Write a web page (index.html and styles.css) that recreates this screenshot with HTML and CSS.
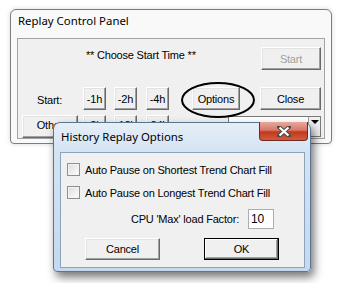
FILE: index.html
```html
<!DOCTYPE html>
<html lang="en">
<head>
  <meta charset="UTF-8">
  <title>Replay Control Panel</title>
  <link rel="stylesheet" href="styles.css">
</head>
<body>

  <div class="win main">
    <div class="title">Replay Control Panel</div>
    <div class="client">
      <div class="row r1">
        <span class="prompt">** Choose Start Time **</span>
        <button class="btn start" disabled>Start</button>
      </div>
      <div class="row r2">
        <span class="lbl">Start:</span>
        <button class="btn sm b1">-1h</button>
        <button class="btn sm b2">-2h</button>
        <button class="btn sm b3">-4h</button>
        <button class="btn opt">Options</button>
        <button class="btn close">Close</button>
      </div>
      <div class="row r3">
        <button class="btn other">Other</button>
        <button class="btn sm b1">-8h</button>
        <button class="btn sm b2">-12h</button>
        <button class="btn sm b3">-24h</button>
        <div class="combo">
          <span>800 (1s:1.0s)</span>
          <span class="drop"></span>
        </div>
      </div>
    </div>
  </div>

  <div class="ring"></div>

  <div class="win dlg">
    <div class="dlg-bar">
      <span class="title">History Replay Options</span>
      <span class="x">
        <svg width="14" height="11" viewBox="0 0 14 11">
          <path d="M2 1 L12 10 M12 1 L2 10" stroke="#4a4a4a" stroke-width="4" stroke-linecap="square"/>
          <path d="M2.5 1.5 L11.5 9.5 M11.5 1.5 L2.5 9.5" stroke="#fff" stroke-width="2.2"/>
        </svg>
      </span>
    </div>
    <div class="client dlg-body">
      <label class="chk"><span class="box"></span>Auto Pause on Shortest Trend Chart Fill</label>
      <label class="chk"><span class="box"></span>Auto Pause on Longest Trend Chart Fill</label>
      <div class="factor">
        <span>CPU 'Max' load Factor:</span>
        <span class="field">10</span>
      </div>
      <div class="actions">
        <button class="btn wide">Cancel</button>
        <button class="btn wide ok">OK</button>
      </div>
    </div>
  </div>

</body>
</html>
```

FILE: styles.css
```css
body {
  margin: 0;
  width: 342px;
  height: 283px;
  background: #fff;
  position: relative;
  overflow: hidden;
  font-family: 'Liberation Sans', Arial, sans-serif;
  font-size: 11px;
  letter-spacing: -0.2px;
  color: #000;
}

/* Fenster */
.win {
  position: absolute;
  box-sizing: border-box;
  display: flex;
  flex-direction: column;
}

.title {
  font-family: 'Noto Sans', sans-serif;
  font-size: 11.4px;
  letter-spacing: 0;
  color: #000;
}

.main {
  left: 10px;
  top: 9px;
  width: 322px;
  height: 135px;
  background: #f9f9f9;
  border: 1px solid #7d7d7d;
  border-radius: 6px 6px 4px 4px;
  padding: 0 6px 4px 6px;
  box-shadow: 0 0 5px rgba(0,0,0,0.15);
}

.main .title {
  height: 28px;
  line-height: 20px;
  padding: 1px 0 0 1px;
  box-sizing: border-box;
}

.client {
  flex: 1;
  background: #f0f0f0;
  border: 1px solid #a3a3a3;
  overflow: hidden;
}

.row {
  display: flex;
  align-items: center;
  height: 23px;
}

.r1 { margin-top: 8px; }
.r2 { margin-top: 17px; }
.r3 { margin-top: 5px; }

.prompt {
  margin-left: 68px;
  width: 175px;
  margin-top: -8px;
}

.lbl {
  margin-left: 19px;
  width: 46px;
  padding-top: 3px;
}

/* Knöpfe */
.btn {
  font: inherit;
  letter-spacing: inherit;
  height: 23px;
  padding: 0;
  background: #f0f0f0;
  color: #000;
  border: 1px solid;
  border-color: #fff #696969 #696969 #fff;
  box-shadow: inset -1px -1px #a0a0a0, inset 1px 1px #e3e3e3;
  box-sizing: border-box;
}

.start {
  width: 60px;
  color: #a0a0a0;
}

.sm { width: 23px; }
.b1 { margin-left: 0; }
.b2 { margin-left: 8px; }
.b3 { margin-left: 9px; }

.opt {
  width: 48px;
  margin-left: 23px;
}

.close {
  width: 61px;
  margin-left: 20px;
}

.other {
  width: 56px;
  margin-left: 4px;
  margin-right: 5px;
  padding-bottom: 4px;
}

.r3 .sm { padding-bottom: 4px; }

.combo {
  margin-left: 59px;
  width: 93px;
  height: 21px;
  background: #fff;
  border: 1px solid #7a7a7a;
  box-sizing: border-box;
  display: flex;
  align-items: center;
  padding-left: 3px;
}

.combo span:first-child { flex: 1; }

.drop {
  width: 11px;
  height: 19px;
  background: #f0f0f0;
  border-left: 1px solid #a0a0a0;
  position: relative;
}

.drop::after {
  content: "";
  position: absolute;
  left: 2px;
  top: 3px;
  border: 4px solid transparent;
  border-top: 4px solid #000;
}

/* Markierung um Options */
.ring {
  position: absolute;
  left: 181px;
  top: 82px;
  width: 70px;
  height: 32px;
  border: 2px solid #000;
  border-radius: 50%;
}

/* Dialog */
.dlg {
  left: 53px;
  top: 122px;
  width: 258px;
  height: 150px;
  border: 1px solid #5d7591;
  border-radius: 7px 7px 4px 4px;
  background: linear-gradient(to bottom, #e6eef8 0%, #d3e3f3 20%, #c4d9ef 100%);
  padding: 0 5px 3px 6px;
  box-shadow: 3px 5px 10px rgba(0,0,0,0.55);
}

.dlg-bar {
  height: 29px;
  display: flex;
  align-items: flex-start;
  justify-content: space-between;
}

.dlg-bar .title {
  padding: 5px 0 0 1px;
  line-height: 17px;
}

.x {
  width: 49px;
  height: 19px;
  margin-top: -1px;
  margin-right: -3px;
  border: 1px solid #6d2a22;
  border-top: 0;
  border-radius: 0 0 4px 4px;
  box-sizing: border-box;
  background: linear-gradient(to bottom, #e8a99c 0%, #d9786a 45%, #c0391f 55%, #d45a3c 100%);
  display: flex;
  align-items: center;
  justify-content: center;
}

.dlg-body {
  border-color: #8da2bb;
  display: flex;
  flex-direction: column;
  padding: 10px 0 0 6px;
}

.chk {
  display: flex;
  align-items: center;
  height: 13px;
  margin-bottom: 10px;
}

.box {
  width: 13px;
  height: 13px;
  box-sizing: border-box;
  border: 1px solid #8e8f8f;
  background: linear-gradient(135deg, #dcdcdc, #fff);
  box-shadow: inset 0 0 0 1px #f4f4f4;
  margin-right: 5px;
}

.factor {
  display: flex;
  align-items: center;
  justify-content: flex-end;
  height: 20px;
  padding-right: 30px;
}

.field {
  width: 26px;
  height: 20px;
  box-sizing: border-box;
  margin-left: 9px;
  background: #fff;
  border: 1px solid #abadb3;
  font-size: 12px;
  padding: 2px 0 0 2px;
}

.actions {
  display: flex;
  margin-top: 9px;
  padding-left: 18px;
}

.wide {
  width: 75px;
  height: 22px;
}

.ok {
  margin-left: 44px;
  border: 1px solid #000;
  box-shadow: inset -1px -1px #696969, inset 1px 1px #fff, inset -2px -2px #a0a0a0;
}
```
